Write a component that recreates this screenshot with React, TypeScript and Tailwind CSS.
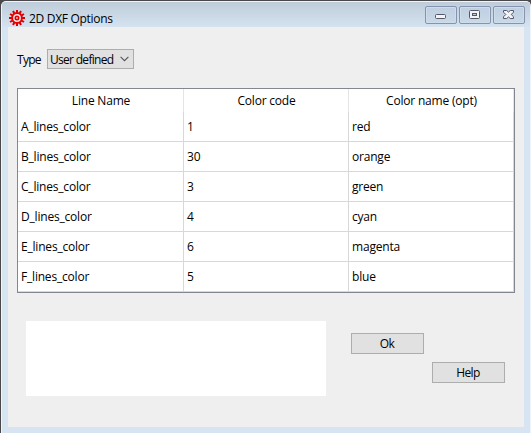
import React from "react";

const rows = [
  ["A_lines_color", "1", "red"],
  ["B_lines_color", "30", "orange"],
  ["C_lines_color", "3", "green"],
  ["D_lines_color", "4", "cyan"],
  ["E_lines_color", "6", "magenta"],
  ["F_lines_color", "5", "blue"],
];

const teeth = [0, 30, 60, 90, 120, 150, 180, 210, 240, 270, 300, 330];

function GearIcon() {
  return (
    <svg width="16" height="16" viewBox="0 0 16 16" className="block shrink-0">
      {teeth.map((a) => (
        <rect key={a} x="7" y="0" width="2" height="3" fill="#dc0000" transform={`rotate(${a} 8 8)`} />
      ))}
      <circle cx="8" cy="8" r="4.9" fill="#f8eaea" stroke="#e60000" strokeWidth="2" />
      <circle cx="8" cy="8" r="1.7" fill="#f8caca" stroke="#e60000" strokeWidth="1.6" />
    </svg>
  );
}

function CaptionButton({ children }: { children: React.ReactNode }) {
  return (
    <div className="flex h-[18px] w-8 items-center justify-center rounded-[2px] border border-[#8593b0] bg-linear-to-b from-[#c0cfdf] to-[#cad9e8] shadow-[inset_0_0_0_1px_#cfdceb]">
      {children}
    </div>
  );
}

function PushButton({ label, className }: { label: string; className: string }) {
  return (
    <button className={`flex h-[21px] w-[73px] items-center justify-center border border-[#adadad] bg-[#e1e1e1] pr-px text-[12px] tracking-[-0.6px] ${className}`}>
      {label}
    </button>
  );
}

export default function App() {
  return (
    <div className="h-[433px] w-[531px] overflow-hidden bg-[#4b484b] font-['Open_Sans','Noto_Sans',sans-serif] text-[12px] leading-4 tracking-[-0.2px] text-black">
      <div className="h-full pt-px pl-px">
        <div className="flex h-full flex-col rounded-t-[5px] border-t border-r border-l border-[#edf4fb] bg-[#d7e4f2] px-[6px]">
          <header className="-mx-[6px] flex h-[25px] shrink-0 items-start rounded-t-[4px] bg-linear-to-b from-[#bfcddb] to-[#d5e2f0] pr-[5px] pl-[7px]">
            <div className="mt-[8px]"><GearIcon /></div>
            <h1 className="mt-[9px] ml-[4px] w-[100px] text-[12px] leading-4 tracking-[-0.3px] whitespace-nowrap">2D DXF Options</h1>
            <div className="mt-[4px] ml-auto flex gap-[2px]">
              <CaptionButton>
                <svg width="12" height="12" viewBox="0 0 12 12"><rect x=".5" y="5.5" width="10" height="4" rx="1" fill="#f3f3f3" stroke="#545669" /></svg>
              </CaptionButton>
              <CaptionButton>
                <svg width="12" height="10" viewBox="0 0 12 10"><rect x=".5" y=".5" width="10" height="8" rx="1" fill="#f3f3f3" stroke="#545669" /><rect x="3.5" y="3.5" width="4" height="2" fill="#bdcddf" stroke="#545669" /></svg>
              </CaptionButton>
              <CaptionButton>
                <svg width="12" height="10" viewBox="0 0 12 10"><path d="M.5.5h3.2l1.8 1.6L7.3.5h3.2v1.7L8.2 4.5l2.3 2.3v1.7H7.3L5.5 6.9 3.7 8.5H.5V6.8l2.3-2.3L.5 2.2z" fill="#f3f3f3" stroke="#545669" /></svg>
              </CaptionButton>
            </div>
          </header>

          <main className="flex h-[400px] w-[516px] shrink-0 flex-col bg-[#efefef] pt-[22px] pl-[9px]">
            <div className="flex h-5 items-center text-[12px] tracking-[-0.7px]">
              <span className="w-[30px] pt-px">Type</span>
              <div className="flex h-5 w-[87px] items-center justify-between border border-[#adadad] bg-[#e1e1e1] pr-[4px] pl-[2px]">
                <span className="pt-px whitespace-nowrap">User defined</span>
                <svg width="9" height="6" viewBox="0 0 9 6"><path d="M.6.8 4.5 4.7 8.4.8" fill="none" stroke="#555" strokeWidth="1.1" /></svg>
              </div>
            </div>

            <div className="mt-[19px] h-[205px] w-[498px] border border-[#828790] bg-white">
              <table className="w-[496px] table-fixed border-separate border-spacing-0">
                <colgroup>
                  <col className="w-[166px]" />
                  <col className="w-[165px]" />
                  <col className="w-[165px]" />
                </colgroup>
                <thead>
                  <tr className="h-[23px]">
                    {["Line Name", "Color code", "Color name (opt)"].map((h) => (
                      <th key={h} className="border-r border-[#e5e5e5] p-0 pt-px pl-px text-center font-normal">{h}</th>
                    ))}
                  </tr>
                </thead>
                <tbody>
                  {rows.map((r) => (
                    <tr key={r[0]} className="h-[30px]">
                      {r.map((c, i) => (
                        <td key={i} className="border-r border-b border-[#d8d8d8] p-0 pt-px pl-[3px]">{c}</td>
                      ))}
                    </tr>
                  ))}
                </tbody>
              </table>
            </div>

            <div className="mt-[28px] flex items-start">
              <div className="ml-[9px] h-[75px] w-[300px] bg-white" />
              <PushButton label="Ok" className="mt-[12px] ml-[25px]" />
              <PushButton label="Help" className="mt-[41px] ml-[8px]" />
            </div>
          </main>
        </div>
      </div>
    </div>
  );
}
